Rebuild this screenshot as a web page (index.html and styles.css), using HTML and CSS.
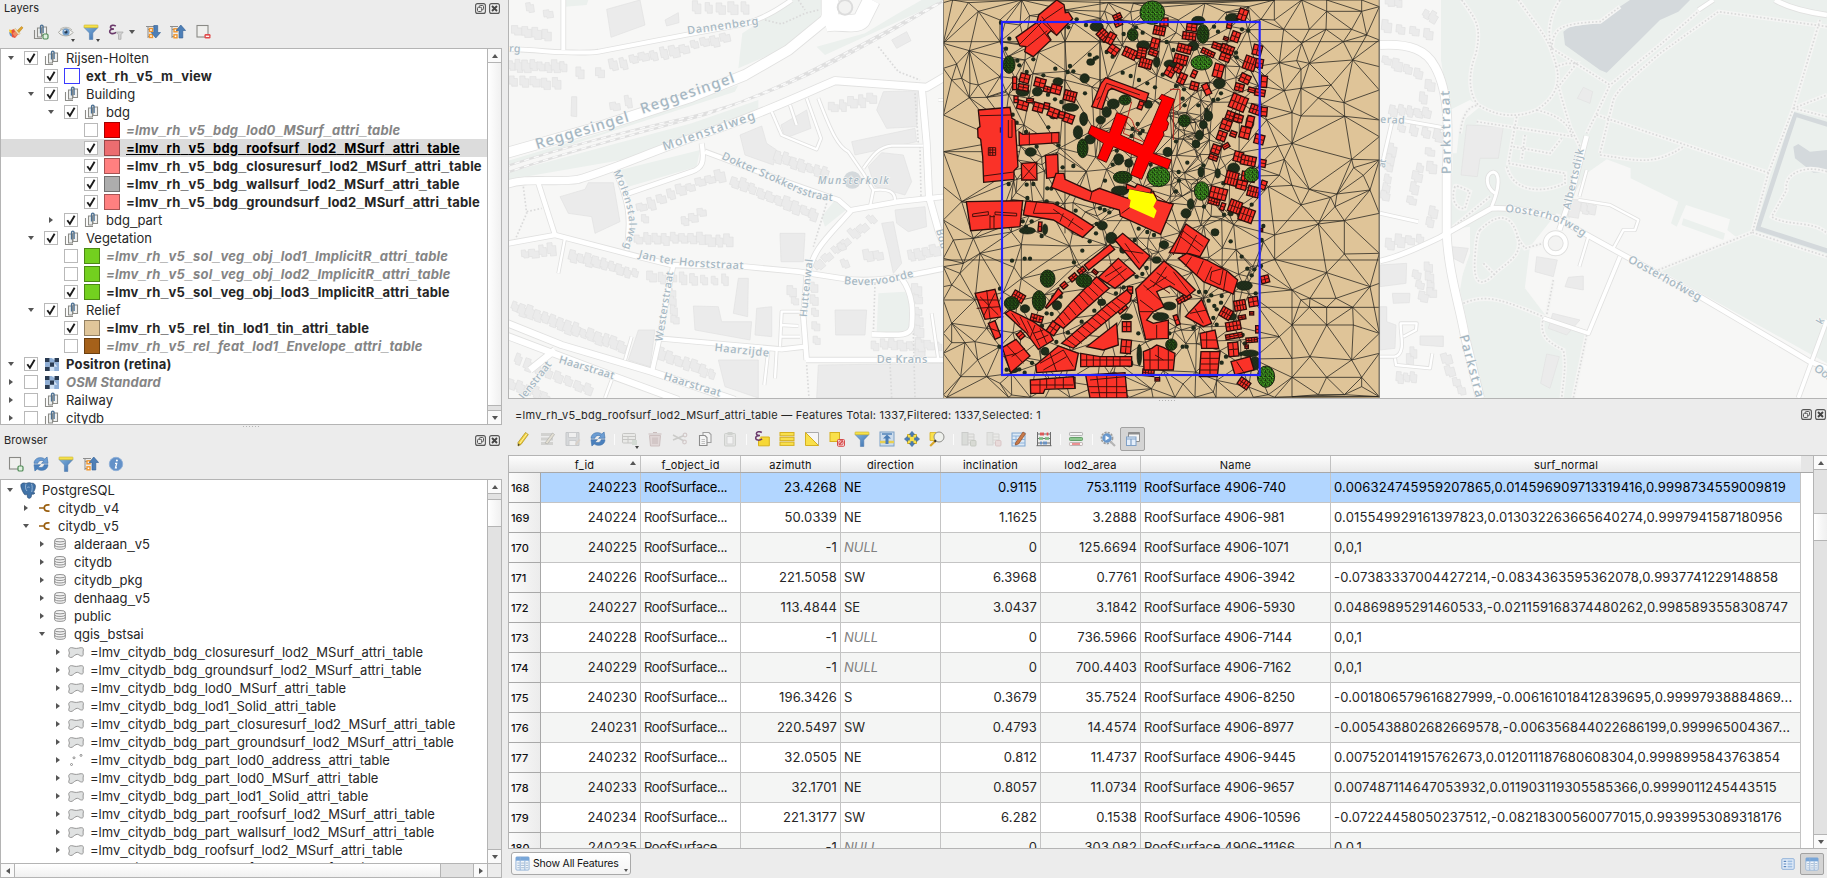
FILE: index.html
```html
<!DOCTYPE html>
<html lang="en">
<head>
<meta charset="utf-8">
<title>QGIS</title>
<link rel="stylesheet" href="styles.css">
</head>
<body>
<svg class="defs" width="0" height="0">
  <defs>
    <linearGradient id="bl" x1="0" y1="0" x2="1" y2="1"><stop offset="0" stop-color="#7fb0dc"/><stop offset="1" stop-color="#3a6fae"/></linearGradient>
    <symbol id="i-float" viewBox="0 0 11 11"><rect x=".6" y=".6" width="9.8" height="9.8" rx="2" fill="none" stroke="#555" stroke-width="1.1"/><rect x="4.3" y="2.5" width="4.2" height="4.2" rx="1" fill="none" stroke="#555"/><rect x="2.5" y="4.3" width="4.2" height="4.2" rx="1" fill="#ececec" stroke="#555"/></symbol>
    <symbol id="i-close" viewBox="0 0 11 11"><rect x=".6" y=".6" width="9.8" height="9.8" rx="2" fill="none" stroke="#555" stroke-width="1.1"/><path d="M3 3l5 5M8 3l-5 5" stroke="#444" stroke-width="1.9"/></symbol>
    <symbol id="i-style" viewBox="0 0 16 16"><path d="M1 5.500l3 .5 2 4-1 3-3-3z" fill="#f5c518"/><path d="M1 8l2.500 1.500L5 13.500l-3-2z" fill="#5b8fd0"/><path d="M3.500 6L6 5l4.500 5L7 14l-3-1z" fill="#e8503c"/><path d="M4.500 9.500l3-2.500 2.500 3-3 3z" fill="#ef8a63"/><path d="M6 5.500l1.500-1 4.500 5-1.500 1.500z" fill="#f2dfb8" stroke="#c9a666" stroke-width=".5"/><path d="M9.300 6.500l4.200-4 1.500 1.300-4 4.700z" fill="#e0a52c" stroke="#b57a14" stroke-width=".5"/></symbol>
    <symbol id="i-group" viewBox="0 0 16 16"><path d="M1.500 6v8.500H9" fill="none" stroke="#8c8c88" stroke-width="1.100"/><path d="M4.500 4h4v9h-4z" fill="#eef0ef" stroke="#8c8c88" stroke-width="1.100"/><path d="M9 3h4.500v8.500H9z" fill="#f2f3f3" stroke="#8c8c88" stroke-width="1.100"/><path d="M7.500 9.500v-7a1.300 1.300 0 0 1 2.600 0v6.500" fill="none" stroke="#4a6f92" stroke-width="1.300"/></symbol>
    <symbol id="i-addgroup" viewBox="0 0 16 16"><use href="#i-group"/><rect x="10" y="10" width="5" height="5" rx="1.200" fill="#dff0df" stroke="#4f8b55" stroke-width="1.200"/></symbol>
    <symbol id="i-eye" viewBox="0 0 16 16"><path d="M.5 8.500C3 4 11 3 15 8.500 12 13 4 13 .5 8.500z" fill="#f1f1ef" stroke="#a9a9a3" stroke-width="1"/><path d="M2 5.500C5 2.500 11 2.500 14 6" fill="none" stroke="#b9b9b3"/><circle cx="8" cy="8" r="3.600" fill="#6f9cc9"/><circle cx="8" cy="8" r="1.600" fill="#24384e"/><circle cx="7" cy="6.800" r=".8" fill="#fff"/></symbol>
    <symbol id="i-funnel" viewBox="0 0 16 16"><path d="M1 3.500h14L9.800 9v6.500H6.400V9z" fill="url(#bl)" stroke="#4875a8" stroke-width=".5"/><rect x="1" y="1" width="14" height="2.700" rx=".6" fill="#f5e14b" stroke="#c9b42d" stroke-width=".6"/></symbol>
    <symbol id="i-eps" viewBox="0 0 16 16"><path d="M7.800 2.200C5.500.6 2.200 1.300 2.400 3.300c.1 1.500 2 1.700 3.600 1.700-2.400 0-4.200.6-4.300 2.400-.1 2.500 4 3 6.400 1" fill="none" stroke="#6b3a6b" stroke-width="1.600"/><path d="M8.300 8h6.900l-2.200 2.700v4.600h-2.500v-4.600z" fill="#d2d2d2" stroke="#a6a6a6" stroke-width=".7"/></symbol>
    <symbol id="i-expand" viewBox="0 0 16 16"><path d="M1 2.500h10M3 2.500V14M3 5.500h3M3 12.500h3" stroke="#8d8d8d" fill="none"/><rect x="4.500" y="4.500" width="3" height="3" fill="#fff" stroke="#f0962e" stroke-width="1.400"/><rect x="4.500" y="10.500" width="3" height="3" fill="#fff" stroke="#f0962e" stroke-width="1.400"/><path d="M8.800 1.500h3.900V8.500h2.800L10.800 14 6.200 8.500h2.600z" fill="#4d7fb7" stroke="#2f5c92" stroke-width=".6"/></symbol>
    <symbol id="i-collapse" viewBox="0 0 16 16"><path d="M0 2.500h8M2 2.500V14M2 5.500h3M2 12.500h3" stroke="#8d8d8d" fill="none"/><rect x="4" y="4.800" width="3" height="3" fill="#fff" stroke="#f0962e" stroke-width="1.400"/><rect x="4" y="10.800" width="3" height="3" fill="#fff" stroke="#f0962e" stroke-width="1.400"/><path d="M9 14h3.800V6.500h2.800L10.800 1 6.200 6.500H9z" fill="#4d7fb7" stroke="#2f5c92" stroke-width=".6"/></symbol>
    <symbol id="i-remove" viewBox="0 0 16 16"><rect x="2" y="1.500" width="11" height="11.500" fill="#f0f0ee" stroke="#8a8a86" stroke-width="1.100"/><rect x="9.500" y="10" width="6" height="4.600" rx="1.300" fill="#e04a4a"/><path d="M10.800 12.300h3.400" stroke="#fff" stroke-width="1.300"/></symbol>
    <symbol id="i-addlayer" viewBox="0 0 16 16"><rect x="1.500" y="1.500" width="11" height="11.500" fill="#f0f0ee" stroke="#8a8a86" stroke-width="1.100"/><rect x="10" y="10" width="5" height="5" rx="1.300" fill="#dff0df" stroke="#4f8b55" stroke-width="1.200"/></symbol>
    <symbol id="i-refresh" viewBox="0 0 16 16"><path d="M1 7.300C1.300 1.500 8 .3 11.800 3l2.300-2 .9 6.300H8.500l2.300-2.200C8.500 3.700 5.500 4.500 4.800 7.300z" fill="#6c9dd3" stroke="#3d6fa8" stroke-width=".6"/><path d="M15 8.700c-.3 5.800-7 7-10.800 4.300l-2.300 2L1 8.700h6.500l-2.300 2.200c2.300 1.400 5.300.6 6-2.200z" fill="#4a80bd" stroke="#3d6fa8" stroke-width=".6"/></symbol>
    <symbol id="i-info" viewBox="0 0 16 16"><circle cx="8" cy="8" r="6.700" fill="#6391c8" stroke="#8fb0d8"/><circle cx="8.900" cy="4.600" r="1" fill="#fff"/><path d="M7 7.300h1.700L7.500 11.800H9" fill="none" stroke="#fff" stroke-width="1.300"/></symbol>
    <symbol id="i-raster" viewBox="0 0 14 14"><path d="M0 1h14v13H0z" fill="#cfe0f3"/><path d="M0 1h4.700v4.300H0zM9.300 1H14v4.300H9.300zM4.700 5.300h4.600v4.400H4.700zM0 9.700h4.700V14H0z" fill="#2a3b52"/><path d="M4.700 1h4.600v4.300H4.700zM0 5.300h4.700v4.400H0zM9.300 5.300H14v4.400H9.300zM9.300 9.700H14V14H9.300z" fill="#8eaed6"/><path d="M6.500 1h2.800v2zM9.300 6l3 3.700h-3z" fill="#d8e6f6"/></symbol>
    <symbol id="i-pg" viewBox="0 0 16 16"><path d="M1 2C2 0 5 .3 6 1c2-1 4-1 5.500-.3C14 .3 16 2 15.300 5c-.3 2-1.300 4-2.300 5l2 .5c-1 1.500-2.500 1.300-3.300.9-.3 2-.2 4.100-2.200 4.400-2 .2-2.300-1.300-2.400-4.300-1 1-2.600 1-3.300-.5C2 8 .3 4 1 2z" fill="#4173a8" stroke="#2b4f78" stroke-width=".7"/><path d="M6 1.500C5 4 5.500 7 7 8.500M11.500 1.500c1 2 .8 5 .2 8M7.200 5c1-.6 2-.6 2.500 0" fill="none" stroke="#a9c4df" stroke-width=".8"/></symbol>
    <symbol id="i-plug" viewBox="0 0 11 8"><path d="M0 4h5M10.500.9H9C6.800.9 5.300 2.400 5.300 4s1.500 3.100 3.700 3.100h1.500" fill="none" stroke="#9a5f0f" stroke-width="1.700"/></symbol>
    <symbol id="i-db" viewBox="0 0 12 12"><path d="M.7 2.300v7.400c0 2.200 10.600 2.200 10.600 0V2.300" fill="#f4f4f4" stroke="#858585" stroke-width=".9"/><ellipse cx="6" cy="2.200" rx="5.300" ry="1.700" fill="#f4f4f4" stroke="#858585" stroke-width=".9"/><path d="M.7 4.800c0 2.200 10.600 2.200 10.600 0M.7 7.300c0 2.200 10.600 2.200 10.600 0" fill="none" stroke="#858585" stroke-width=".9"/></symbol>
    <symbol id="i-poly" viewBox="0 0 16 11"><path d="M.8 2.500C1.500.5 3 .4 5 .9c3 .9 4.500.4 7-.1 2-.4 3.500.1 3.400 1.700-.1 1.800-.6 3-.2 5 .2 1.300-1.200 1.900-2.700 1.300-1.800-.9-2.500-2-4.500-1.200C5.500 8.700 5 10.600 2.700 10.500.4 10.300.4 8.600 1.200 7c.7-1.500-.8-2.800-.4-4.500z" fill="#e0e2e2" stroke="#8b8b8b" stroke-width=".9"/></symbol>
    <symbol id="i-points" viewBox="0 0 16 12"><g fill="#fff" stroke="#777" stroke-width=".8"><circle cx="3.500" cy="10.500" r="1"/><circle cx="6" cy="3.800" r="1"/><circle cx="13" cy="1.400" r="1"/></g></symbol>
    <symbol id="i-pencil" viewBox="0 0 16 16"><path d="M3 11.500L10.500 1.500l2.800 2L6 13.500l-3 1.500z" fill="#f2cf3c" stroke="#a58d22" stroke-width=".7"/><path d="M5 12L12 2.600" stroke="#fff3a5"/><path d="M3 15l.2-2.400 1.600 1.200z" fill="#333"/></symbol>
    <symbol id="i-multiedit" viewBox="0 0 16 16"><path d="M1 2h12v3H1zM1 6.500h12v3H1zM1 11h12v3H1z" fill="#d2d2d0"/><path d="M5 12L12.500 2l2 1.500L7.500 13z" fill="#e3dfd3" stroke="#b5b5b1" stroke-width=".8"/></symbol>
    <symbol id="i-save" viewBox="0 0 16 16"><path d="M1 1.500h13v13H1z" fill="#d6d8da" stroke="#c5c7c9"/><path d="M3.500 1.500h8v5h-8zM4 9.500h7v5H4z" fill="#efefef" stroke="#c5c7c9" stroke-width=".8"/><path d="M10 13l4-5 1.500 1L11 14.500z" fill="#d8d0c8"/></symbol>
    <symbol id="i-addfeat" viewBox="0 0 16 16"><rect x=".5" y="2.500" width="13" height="9.500" rx="1" fill="#e9e9e7" stroke="#c6c6c4"/><path d="M.5 5.500h13M.5 8.500h13M6 5.500V12" stroke="#c6c6c4"/><rect x="10" y="9" width="5" height="5" fill="#d3dad3"/></symbol>
    <symbol id="i-trash" viewBox="0 0 16 16"><path d="M2.500 4.500h11l-1 10.500h-9z" fill="#e0d6d6" stroke="#cdc0c0"/><path d="M1.500 3h13M6 1.500h4M6 6.500v6.500M8 6.500v6.500M10 6.500v6.500" stroke="#c9bcbc" stroke-width="1.200"/></symbol>
    <symbol id="i-cut" viewBox="0 0 16 16"><path d="M1 4l11 6M1 9l11-4.500" stroke="#cbcbc9" stroke-width="1.500"/><circle cx="13" cy="4" r="1.800" fill="none" stroke="#d3caca" stroke-width="1.200"/><circle cx="12.500" cy="11" r="1.800" fill="none" stroke="#d3caca" stroke-width="1.200"/></symbol>
    <symbol id="i-copy" viewBox="0 0 16 16"><path d="M6 1.500h6l2 2v8H6z" fill="#f3f3f3" stroke="#a0a0a0" stroke-width="1.100"/><path d="M2.500 4.500H8l2 2v8H2.500z" fill="#f5f5f5" stroke="#8c8c8c" stroke-width="1.100"/><path d="M4.500 8.500h3.500M4.500 10.500h3.500M4.500 12.500h3.500" stroke="#b4b4b4" stroke-width=".8"/></symbol>
    <symbol id="i-paste" viewBox="0 0 16 16"><rect x="2.500" y="2.500" width="11" height="12.500" rx="1" fill="#e2e3e1" stroke="#cdcfcc"/><path d="M5 5.500h6V13H5z" fill="#f2f2f2" stroke="#d5d5d5"/><rect x="5.500" y="1" width="5" height="3" fill="#cfd1ce"/></symbol>
    <symbol id="i-selexpr" viewBox="0 0 16 16"><path d="M6.500 6h8.800v8.800H4.500V9" fill="#f6d837" stroke="#d8b21a"/><path d="M7.800 1.500C5.500 0 2.200.8 2.400 2.800c.1 1.500 2 1.700 3.600 1.700-2.400 0-4.200.6-4.300 2.400-.1 2.500 4 3 6.400 1" fill="none" stroke="#6b3a6b" stroke-width="1.500"/></symbol>
    <symbol id="i-selall" viewBox="0 0 16 16"><g fill="#f9e04b" stroke="#d5b021"><rect x="1" y="1.500" width="14" height="3.300"/><rect x="1" y="6.300" width="14" height="3.300"/><rect x="1" y="11.100" width="14" height="3.300"/></g></symbol>
    <symbol id="i-invert" viewBox="0 0 16 16"><path d="M1.500 1.500h13v13z" fill="#f5f5f5" stroke="#aaa"/><path d="M1.500 1.500v13h13z" fill="#f9e04b" stroke="#d5b021"/></symbol>
    <symbol id="i-desel" viewBox="0 0 16 16"><rect x="1" y="1.500" width="9.500" height="9" fill="#f9e04b" stroke="#d5b021"/><rect x="8.500" y="8.500" width="7" height="6.800" rx="1" fill="#f6d9d9" stroke="#d64b4b"/><path d="M10 14l4-4.500" stroke="#d64b4b" stroke-width="1.300"/><circle cx="12" cy="11.800" r="2.200" fill="none" stroke="#d64b4b" stroke-width=".9"/></symbol>
    <symbol id="i-movetop" viewBox="0 0 16 16"><rect x="1" y="1" width="14" height="14" fill="#cddcec" stroke="#7ba0c6"/><path d="M1 11h14" stroke="#e7cf52" stroke-width="2.500"/><path d="M8 3.500l4 4H9.500V13h-3V7.500H4z" fill="#4a7db6"/><path d="M3 3h10" stroke="#4a7db6" stroke-width="1.400"/></symbol>
    <symbol id="i-pan" viewBox="0 0 16 16"><path d="M3.500 3.500h9v9h-9z" fill="#f9e04b" stroke="#d5b021"/><path d="M8 .3L10.800 3.500H9.200V5.500H6.800V3.500H5.200zM8 15.700L5.200 12.500h1.600v-2h2.400v2h1.600zM.3 8l3.200-2.800v1.600h2v2.400h-2v1.600zM15.700 8l-3.200 2.800V9.200h-2V6.800h2V5.200z" fill="#4a7db6" stroke="#335f92" stroke-width=".4"/></symbol>
    <symbol id="i-zoom" viewBox="0 0 16 16"><path d="M1 1.500h6v8H1z" fill="#f9e04b" stroke="#d5b021" stroke-width=".8"/><circle cx="10" cy="6" r="5" fill="#eef0ec" stroke="#8e8e8a" stroke-width="1"/><path d="M6.500 9.800L1.200 15" stroke="#d7a62b" stroke-width="2.200"/><path d="M7 9.300l-1.500 1.500" stroke="#333" stroke-width="2"/></symbol>
    <symbol id="i-newfield" viewBox="0 0 16 16"><rect x="1" y="1.500" width="6" height="12.500" fill="#dadcd9" stroke="#cacbc9"/><path d="M7 3h6v9H7zM7 6h6M7 9h6" fill="#e8e8e6" stroke="#d0d0ce"/><rect x="9.500" y="9.500" width="5.500" height="5.500" rx="1" fill="#d8dad4" stroke="#c6cac2"/></symbol>
    <symbol id="i-delfield" viewBox="0 0 16 16"><rect x="1" y="1.500" width="6" height="12.500" fill="#e2e3e1" stroke="#d5d6d4"/><path d="M7 3h6v9H7zM7 6h6M7 9h6" fill="#eaeae8" stroke="#d6d6d4"/><rect x="9.500" y="9.500" width="5.500" height="5.500" rx="1" fill="#e8dada" stroke="#d9c6c6"/></symbol>
    <symbol id="i-organize" viewBox="0 0 16 16"><rect x="1" y="2" width="13" height="13" fill="#dde9f5" stroke="#7fa6d0"/><path d="M1 5h13M5 5v10M1 8.500h13M1 12h13" stroke="#8fb4dc"/><path d="M4.500 12L12 1l2.500 1.700L7.500 13l-3.200 1z" fill="#c87a4a" stroke="#8f4e28" stroke-width=".7"/></symbol>
    <symbol id="i-abacus" viewBox="0 0 16 16"><path d="M1.500 1v14M14.500 1v14M1.500 3h13M1.500 7.500h13M1.500 12h13M.5 14.700h15" stroke="#6e6e6e" stroke-width="1"/><path d="M5 1.500v3M7 1.500v3M11.500 1.500v3" stroke="#e24b4b" stroke-width="1.700"/><path d="M4 6v3M6 6v3M10 6v3M12 6v3" stroke="#7fbf86" stroke-width="1.700"/><path d="M5 10.500v3M8 10.500v3M10 10.500v3" stroke="#5f8ec6" stroke-width="1.700"/></symbol>
    <symbol id="i-cond" viewBox="0 0 16 16"><rect x="1.500" y="1.500" width="13" height="3" rx=".8" fill="#f4f4f4" stroke="#a8a8a8" stroke-width=".9"/><rect x="1.500" y="6.500" width="13" height="3" rx=".8" fill="#8cc68e" stroke="#5b9a60" stroke-width=".9"/><rect x="1.500" y="11.500" width="13" height="3" rx=".8" fill="#faf3f3" stroke="#b8adad" stroke-width=".9"/><path d="M4 13h8" stroke="#e05050" stroke-width="1.200"/></symbol>
    <symbol id="i-action" viewBox="0 0 16 16"><circle cx="7" cy="7" r="5.600" fill="#dce8f4" stroke="#9d9d9d" stroke-width="1.600" stroke-dasharray="2.200 1.100"/><circle cx="7" cy="7" r="4.300" fill="#6a9ad0" stroke="#4d7cb0" stroke-width=".6"/><path d="M5.500 4.500L9.500 7l-4 2.500z" fill="#fff"/><path d="M10.500 10.500l4.500 4.500" stroke="#b5b5b5" stroke-width="2.200"/></symbol>
    <symbol id="i-dock" viewBox="0 0 16 16"><path d="M3.500 1.500h11v9h-11z" fill="#f6f6f6" stroke="#8d8d8d"/><path d="M3.500 2.500h11" stroke="#8d8d8d" stroke-width="2"/><rect x="1.500" y="6" width="9.500" height="8.500" fill="#e4eefa" stroke="#7fa0c6"/><path d="M1.500 8h9.500M6 8v6.500" stroke="#7fa0c6" stroke-width="1.200"/></symbol>
    <symbol id="i-table" viewBox="0 0 16 16"><rect x="1" y="1" width="14" height="14" rx="1" fill="#f2f6fb" stroke="#8fb0d6"/><path d="M1 1h14v4H1z" fill="#78a6d8"/><path d="M5.500 1v14M10.500 5v10" stroke="#8fb0d6"/><path d="M2.500 7.500H5M2.500 10H5M2.500 12.500H5M6.500 7.500h3.500M6.500 10h3.500M6.500 12.500h3.500M11.500 7.500h2.500M11.500 10h2.500M11.500 12.500h2.500" stroke="#9fb6cf"/></symbol>
    <symbol id="i-form" viewBox="0 0 16 16"><rect x="1" y="2" width="14" height="12" rx="1" fill="#e6effa" stroke="#7ba3d3"/><path d="M3 5h3M3 8h3M3 11h3" stroke="#5b86bd" stroke-width="1.400"/><path d="M7.500 5H13M7.500 8H13M7.500 11H13" stroke="#9dbde2" stroke-width="1.800"/></symbol>
    <pattern id="leaf" width="11" height="11" patternUnits="userSpaceOnUse"><rect width="11" height="11" fill="#16260f"/><path d="M1 2h2v2H1zM6 1h3v2H6zM3 6h2v3H3zM8 6h2v2H8zM6 9h2v1.500H6z" fill="#3f9a1f"/></pattern>
    <pattern id="leafhi" width="13" height="13" patternUnits="userSpaceOnUse"><rect width="13" height="13" fill="#16300d"/><path d="M0 1h5v3H0zM8 0h4v3H8zM3 6h3v4H3zM9 6h4v3H9zM6 10h3v3H6z" fill="#58d42a"/></pattern>
    <pattern id="leaflo" width="9" height="9" patternUnits="userSpaceOnUse"><rect width="9" height="9" fill="#1e2a19"/><path d="M1 2h2v1H1zM5 5h2v2H5z" fill="#2f5a22"/></pattern>
  </defs>
</svg>

<div class="app">
  <aside class="side">
    <section class="dock dock-layers">
      <header class="dock-title"><span>Layers</span><svg class="tb"><use href="#i-float"/></svg><svg class="tb"><use href="#i-close"/></svg></header>
      <div class="toolbar side-tools">
        <span class="tool"><svg><use href="#i-style"/></svg></span>
        <span class="tool"><svg><use href="#i-addgroup"/></svg></span>
        <span class="tool has-menu"><svg><use href="#i-eye"/></svg></span>
        <span class="tool has-menu"><svg><use href="#i-funnel"/></svg></span>
        <span class="tool"><svg><use href="#i-eps"/></svg></span>
        <span class="drop"><i class="tri down small"></i></span>
        <span class="tool"><svg><use href="#i-expand"/></svg></span>
        <span class="tool"><svg><use href="#i-collapse"/></svg></span>
        <span class="tool"><svg><use href="#i-remove"/></svg></span>
      </div>
      <div class="tree">
        <div class="rows" id="layers"></div>
        <div class="vscroll"><b class="btn"><i class="tri up small"></i></b><b class="thumb fill"></b><b class="gap"></b><b class="btn"><i class="tri down small"></i></b></div>
      </div>
    </section>
    <div class="splitter"></div>
    <section class="dock dock-browser">
      <header class="dock-title"><span>Browser</span><svg class="tb"><use href="#i-float"/></svg><svg class="tb"><use href="#i-close"/></svg></header>
      <div class="toolbar side-tools">
        <span class="tool"><svg><use href="#i-addlayer"/></svg></span>
        <span class="tool"><svg><use href="#i-refresh"/></svg></span>
        <span class="tool"><svg><use href="#i-funnel"/></svg></span>
        <span class="tool"><svg><use href="#i-collapse"/></svg></span>
        <span class="tool"><svg><use href="#i-info"/></svg></span>
      </div>
      <div class="tree">
        <div class="rows" id="browser"></div>
        <div class="vscroll"><b class="btn"><i class="tri up small"></i></b><b class="gap six"></b><b class="thumb short"></b><b class="gap fill"></b><b class="btn"><i class="tri down small"></i></b></div>
      </div>
      <div class="hscroll"><b class="btn"><i class="tri left small"></i></b><b class="thumb fill"></b><b class="gap"></b><b class="btn"><i class="tri right small"></i></b><b class="corner"></b></div>
    </section>
  </aside>

  <main class="main">
    <div class="mapbox">
      <svg id="map" width="1318" height="398" viewBox="509 0 1318 398">
        <rect x="508" width="1319" height="398" fill="#f7f7f6"/>
        <g transform="translate(505 0) scale(.33333)" id="west"></g>
        <g transform="translate(1370 0) scale(.33333)" id="east"></g>
        <g transform="translate(940 0) scale(.33333)" id="model"></g>
      </svg>
    </div>
    <div class="splitter"></div>
    <header class="dock-title table-title"><span>=lmv_rh_v5_bdg_roofsurf_lod2_MSurf_attri_table — Features Total: 1337,Filtered: 1337,Selected: 1</span><svg class="tb"><use href="#i-float"/></svg><svg class="tb"><use href="#i-close"/></svg></header>
    <div class="toolbar table-tools">
      <span class="tool"><svg><use href="#i-pencil"/></svg></span>
      <span class="tool"><svg><use href="#i-multiedit"/></svg></span>
      <span class="tool"><svg><use href="#i-save"/></svg></span>
      <span class="tool"><svg><use href="#i-refresh"/></svg></span>
      <i class="sep"></i>
      <span class="tool has-menu"><svg><use href="#i-addfeat"/></svg></span>
      <span class="tool"><svg><use href="#i-trash"/></svg></span>
      <span class="tool"><svg><use href="#i-cut"/></svg></span>
      <span class="tool"><svg><use href="#i-copy"/></svg></span>
      <span class="tool"><svg><use href="#i-paste"/></svg></span>
      <i class="sep"></i>
      <span class="tool"><svg><use href="#i-selexpr"/></svg></span>
      <span class="tool"><svg><use href="#i-selall"/></svg></span>
      <span class="tool"><svg><use href="#i-invert"/></svg></span>
      <span class="tool"><svg><use href="#i-desel"/></svg></span>
      <span class="tool"><svg><use href="#i-funnel"/></svg></span>
      <span class="tool"><svg><use href="#i-movetop"/></svg></span>
      <span class="tool"><svg><use href="#i-pan"/></svg></span>
      <span class="tool"><svg><use href="#i-zoom"/></svg></span>
      <i class="sep"></i>
      <span class="tool"><svg><use href="#i-newfield"/></svg></span>
      <span class="tool"><svg><use href="#i-delfield"/></svg></span>
      <span class="tool"><svg><use href="#i-organize"/></svg></span>
      <span class="tool"><svg><use href="#i-abacus"/></svg></span>
      <i class="sep"></i>
      <span class="tool"><svg><use href="#i-cond"/></svg></span>
      <i class="sep"></i>
      <span class="tool"><svg><use href="#i-action"/></svg></span>
      <span class="tool pressed"><svg><use href="#i-dock"/></svg></span>
    </div>
    <div class="grid">
      <div class="grid-main">
        <div class="ghead"><span></span><span class="sorted">f_id<i class="tri up small"></i></span><span>f_object_id</span><span>azimuth</span><span>direction</span><span>inclination</span><span>lod2_area</span><span>Name</span><span>surf_normal</span></div>
        <div id="rows"></div>
      </div>
      <div class="vscroll"><b class="btn"><i class="tri up small"></i></b><b class="gap g43"></b><b class="thumb short"></b><b class="gap fill"></b><b class="btn"><i class="tri down small"></i></b></div>
    </div>
    <footer class="foot">
      <div class="showall"><svg><use href="#i-table"/></svg><span>Show All Features</span><i class="tri down tiny"></i></div>
      <span class="view"><svg><use href="#i-form"/></svg></span>
      <span class="view on"><svg><use href="#i-table"/></svg></span>
    </footer>
  </main>
</div>
<script src="app.js"></script>
</body>
</html>
```

FILE: styles.css
```css
* { box-sizing: border-box; }
body { margin: 0; width: 1827px; height: 878px; overflow: hidden; background: #ececec; font-family: Inter, "Liberation Sans", sans-serif; font-size: 13px; color: #262626; }
.defs { position: absolute; }
.app { display: flex; height: 878px; }
.side { width: 502px; display: flex; flex-direction: column; }
.main { width: 1319px; margin-left: 6px; display: flex; flex-direction: column; }
.dock { display: flex; flex-direction: column; }
.dock-layers { height: 425px; }
.dock-browser { height: 448px; padding-top: 2px; }
.dock-title { display: flex; align-items: center; gap: 3px; height: 16px; padding: 0 2px 0 4px; font-size: 11px; letter-spacing: .1px; flex: none; }
.dock-title span { flex: 1; white-space: nowrap; }
.tb { width: 11px; height: 11px; }
.splitter { height: 5px; flex: none; background: repeating-linear-gradient(90deg, #b5b5b5 0 1px, transparent 1px 3px) center 1px / 17px 1px no-repeat; }
.toolbar { display: flex; align-items: center; height: 32px; flex: none; }
.dock-browser .toolbar { height: 31px; }
.side-tools { padding-left: 3px; }
.tool { position: relative; width: 25px; height: 24px; display: flex; align-items: center; justify-content: center; }
.tool svg { width: 16px; height: 16px; }
.has-menu::after { content: ""; position: absolute; right: 3px; bottom: 2px; border: 2.5px solid transparent; border-top: 3px solid #444; border-bottom: 0; }
.pressed { border: 1px solid #a2a2a2; border-radius: 2px; background: #d4d4d4; }
.sep { width: 7px; height: 11px; background: linear-gradient(#fbfbfb, #fbfbfb) 4px 0 / 1px 100% no-repeat; }
.drop { width: 12px; padding-left: 1px; }
.tri { display: block; width: 0; height: 0; border: 4px solid transparent; }
.tri.down { border-top: 5px solid #555; border-bottom: 0; }
.tri.up { border-bottom: 5px solid #555; border-top: 0; }
.tri.right { border-left: 5px solid #555; border-right: 0; }
.tri.left { border-right: 5px solid #555; border-left: 0; }
.tri.small { border-left-width: 3.5px; border-right-width: 3.5px; }
.tri.small.up { border-bottom-width: 4px; }
.tri.small.down { border-top-width: 4px; }
.tri.small.left { border-width: 3.5px 4px 3.5px 0; }
.tri.small.right { border-width: 3.5px 0 3.5px 4px; }
.tri.tiny { border-width: 3px 2.5px 0; }
.tree { flex: 1; min-height: 0; display: flex; border: 1px solid #b4b4b4; background: #fff; }
.dock-browser .tree { border-bottom: 0; }
.rows { flex: 1; min-width: 0; overflow: hidden; }
.row { height: 18px; display: flex; align-items: center; white-space: nowrap; }
.row .exp { width: 10px; display: flex; justify-content: center; flex: none; }
.us { font-family: "Liberation Sans", sans-serif; font-size: 13.5px; line-height: 1; }
.b .us, .off .us { font-size: 14.5px; letter-spacing: 0; }
.box { width: 14px; height: 14px; border: 1px solid #b9b9b9; background: #fff; margin: 0 6px 0 8px; flex: none; }
.box svg { display: block; width: 12px; height: 12px; }
.icon { width: 16px; height: 16px; margin-right: 6px; flex: none; }
.icon.raster { width: 14px; height: 14px; margin: 0 7px 0 1px; }
.swatch { width: 16px; height: 16px; margin-right: 6px; border: 1px solid rgba(0, 0, 0, .35); flex: none; }
.s-view { border: 1px solid #3a3aff; }
.s-red { background: #f00; }
.s-roof { background: #eb6d70; }
.s-pink { background: #ff8080; }
.s-gray { background: #adadad; }
.s-green { background: #73d01f; }
.s-tan { background: #e0c69a; }
.s-brown { background: #a5611a; }
.row.b { font-weight: 700; letter-spacing: .17px; }
.row.off { font-weight: 700; font-style: italic; letter-spacing: .17px; color: #858585; }
.row.sel { background: #dcdcdc; color: #000; }
.row.sel .label { text-decoration: underline; }
.l0 { padding-left: 5px; }
.l1 { padding-left: 25px; }
.l2 { padding-left: 45px; }
.l3 { padding-left: 65px; }
.m0 { padding-left: 3px; }
.m1 { padding-left: 19px; }
.m2 { padding-left: 35px; }
.m3 { padding-left: 51px; }
#browser { padding-top: 1px; }
#browser .exp { width: 11px; margin-right: 4px; }
#browser .icon { margin-right: 6px; margin-left: 1px; }
.m0 .icon { height: 17px; }
#browser .db { width: 12px; height: 12px; margin-left: 3px; margin-right: 8px; }
#browser .plug { width: 11px; height: 8px; margin-left: 4px; margin-right: 8px; }
#browser .poly { height: 11px; }
.vscroll { width: 14px; flex: none; border-left: 1px solid #b4b4b4; background: #e2e2e2; display: flex; flex-direction: column; }
.vscroll .btn { height: 14px; display: flex; align-items: center; justify-content: center; background: #fafafa; border-bottom: 1px solid #b4b4b4; flex: none; }
.vscroll .btn:last-child { border-bottom: 0; border-top: 1px solid #b4b4b4; }
.vscroll .thumb { background: linear-gradient(90deg, #fff, #f0f0f0); border-bottom: 1px solid #b4b4b4; }
.vscroll .gap + .thumb { border-top: 1px solid #b4b4b4; }
.vscroll .short { height: 28px; }
.vscroll .gap { height: 4px; }
.vscroll .six { height: 5px; }
.vscroll .g43 { height: 43px; }
.vscroll .fill { flex: 1; }
.hscroll { display: flex; height: 15px; border: 1px solid #b4b4b4; background: #e2e2e2; flex: none; }
.hscroll .btn { width: 14px; background: #fafafa; border-right: 1px solid #b4b4b4; display: flex; align-items: center; justify-content: center; }
.hscroll .thumb { flex: 1; background: linear-gradient(#fff, #f0f0f0); border-right: 1px solid #b4b4b4; }
.hscroll .gap { width: 33px; border-right: 1px solid #b4b4b4; }
.hscroll .corner { width: 13px; background: #ececec; }
.mapbox { height: 399px; border-left: 1px solid #b4b4b4; border-bottom: 1px solid #b4b4b4; flex: none; overflow: hidden; }
#map { display: block; }
.main .splitter { height: 3px; }
.table-title { height: 25px; padding: 0 1px 0 7px; letter-spacing: .25px; }
.table-tools { height: 28px; padding: 0 0 4px 2px; }
.grid { display: flex; height: 394px; border: 1px solid #b4b4b4; border-right: 0; background: #fff; flex: none; }
.grid-main { width: 1304px; overflow: hidden; }
.ghead, .gr { display: grid; grid-template-columns: 32px repeat(6, 100px) 190px 470px; width: 1292px; }
.ghead { height: 17px; width: 1304px; font-size: 11px; letter-spacing: .2px; color: #111; background: #e6e6e6; border-bottom: 1px solid #a8a8a8; }
.ghead span { position: relative; display: flex; align-items: center; justify-content: center; padding-top: 2px; border-right: 1px solid #c2c2c2; background: linear-gradient(#fdfdfd, #e9e9e9); }
.ghead span:first-child, .ghead span:last-child { border-right: 0; }
.ghead .sorted { padding-right: 12px; }
.ghead .tri { position: absolute; right: 4px; top: 5px; }
.gr { height: 30px; }
.gr span { display: flex; align-items: center; border-right: 1px solid #c4c4c4; border-bottom: 1px solid #c4c4c4; padding: 0 3px 1px; white-space: nowrap; overflow: hidden; }
.gr:nth-child(odd) span { background: #f4f5f4; }
.gr:nth-child(even) span { background: #fff; }
.gr.sel span { background: #b2d6ff; color: #000; }
.gr span.hd, .gr.sel span.hd { font-size: 11px; font-weight: 500; letter-spacing: 0; padding: 0 2px; color: #111; background: linear-gradient(90deg, #fbfbfb, #ececec); border-right-color: #a8a8a8; border-bottom-color: #a8a8a8; }
.gr .num { justify-content: flex-end; letter-spacing: .15px; }
.gr .obj { letter-spacing: -.33px; }
.gr .vec { letter-spacing: .17px; }
.gr .nul { font-style: italic; color: #808080; }
.foot { flex: 1; display: flex; align-items: center; padding: 0 3px 0 3px; }
.showall { position: relative; display: flex; align-items: center; width: 120px; height: 23px; margin-right: auto; padding-left: 3px; border: 1px solid #a9a9a9; border-radius: 3px; background: linear-gradient(#fff, #f3f3f3); font-size: 10.5px; letter-spacing: -.2px; color: #111; }
.showall svg { width: 15px; height: 15px; margin-right: 3px; }
.showall .tri { position: absolute; right: 2px; bottom: 2px; }
.view { width: 24px; height: 22px; display: flex; align-items: center; justify-content: center; }
.view svg { width: 14px; height: 14px; }
.view.on { border: 1px solid #a2a2a2; border-radius: 2px; background: #d4d4d4; }
.street { fill: #a6b7c3; font-family: "Noto Sans", sans-serif; font-weight: 500; stroke: #f7f7f6; stroke-width: 4px; paint-order: stroke; }
.casing { fill: none; stroke: #e1e1e0; stroke-linejoin: round; }
.road { fill: none; stroke: #fff; stroke-linejoin: round; }
.path { fill: none; stroke: #dadada; stroke-width: 5px; stroke-dasharray: 5 6; }
.pathbed { fill: none; stroke: #f5f5f4; stroke-width: 13px; }
.green { fill: #ebf0ed; }
.water { fill: #d4d9dc; }
.house { fill: #ebebeb; stroke: #e1e1e1; stroke-width: 2px; }
.tin { fill: none; stroke: #2b2822; stroke-width: 2.8px; stroke-opacity: .85; }
.bld { fill: #fa3228; stroke: #2c0f0c; stroke-width: 4px; }
.bldline { fill: none; stroke: #450f0b; stroke-width: 3px; }
.tree-dot { fill: #1f2a1b; }
```

FILE: app.js
```js
// ---------- layer tree ----------
const tick = '<svg viewBox="0 0 12 12"><path d="M2.300 6.300l2.600 3.500L9.600 1.800" fill="none" stroke="#1c1c1c" stroke-width="1.900"/></svg>';
const wide = s => s.replace(/_/g, '<span class="us">_</span>');
const layers = [
  [0, 'open', 1, 'group', '', 'Rijsen-Holten'],
  [1, '', 1, 's-view', 'b', 'ext_rh_v5_m_view'],
  [1, 'open', 1, 'group', '', 'Building'],
  [2, 'open', 1, 'group', '', 'bdg'],
  [3, '', 0, 's-red', 'off', '=lmv_rh_v5_bdg_lod0_MSurf_attri_table'],
  [3, '', 1, 's-roof', 'b sel', '=lmv_rh_v5_bdg_roofsurf_lod2_MSurf_attri_table'],
  [3, '', 1, 's-pink', 'b', '=lmv_rh_v5_bdg_closuresurf_lod2_MSurf_attri_table'],
  [3, '', 1, 's-gray', 'b', '=lmv_rh_v5_bdg_wallsurf_lod2_MSurf_attri_table'],
  [3, '', 1, 's-pink', 'b', '=lmv_rh_v5_bdg_groundsurf_lod2_MSurf_attri_table'],
  [2, 'shut', 1, 'group', '', 'bdg_part'],
  [1, 'open', 1, 'group', '', 'Vegetation'],
  [2, '', 0, 's-green', 'off', '=lmv_rh_v5_sol_veg_obj_lod1_ImplicitR_attri_table'],
  [2, '', 0, 's-green', 'off', '=lmv_rh_v5_sol_veg_obj_lod2_ImplicitR_attri_table'],
  [2, '', 1, 's-green', 'b', '=lmv_rh_v5_sol_veg_obj_lod3_ImplicitR_attri_table'],
  [1, 'open', 1, 'group', '', 'Relief'],
  [2, '', 1, 's-tan', 'b', '=lmv_rh_v5_rel_tin_lod1_tin_attri_table'],
  [2, '', 0, 's-brown', 'off', '=lmv_rh_v5_rel_feat_lod1_Envelope_attri_table'],
  [0, 'open', 1, 'raster', 'b', 'Positron (retina)'],
  [0, 'shut', 0, 'raster', 'off', 'OSM Standard'],
  [0, 'shut', 0, 'group', '', 'Railway'],
  [0, 'shut', 0, 'group', '', 'citydb']
];
const exp = s => `<span class="exp">${s ? `<i class="tri small ${s === 'open' ? 'down' : 'right'}"></i>` : ''}</span>`;
document.getElementById('layers').innerHTML = layers.map(([lv, ex, on, ic, cls, name]) => {
  const pic = ic.startsWith('s-') ? `<span class="swatch ${ic}"></span>` : `<svg class="icon ${ic}"><use href="#i-${ic}"/></svg>`;
  return `<div class="row l${lv} ${cls}">${exp(ex)}<span class="box">${on ? tick : ''}</span>${pic}<span class="label">${wide(name)}</span></div>`;
}).join('');

// ---------- browser tree ----------
const p = '=lmv_citydb_bdg_';
const browser = [
  [0, 'open', 'pg', 'PostgreSQL'], [1, 'shut', 'plug', 'citydb_v4'], [1, 'open', 'plug', 'citydb_v5'],
  [2, 'shut', 'db', 'alderaan_v5'], [2, 'shut', 'db', 'citydb'], [2, 'shut', 'db', 'citydb_pkg'],
  [2, 'shut', 'db', 'denhaag_v5'], [2, 'shut', 'db', 'public'], [2, 'open', 'db', 'qgis_bstsai'],
  ...['closuresurf_lod2_MSurf', 'groundsurf_lod2_MSurf', 'lod0_MSurf', 'lod1_Solid', 'part_closuresurf_lod2_MSurf',
    'part_groundsurf_lod2_MSurf', 'part_lod0_address', 'part_lod0_MSurf', 'part_lod1_Solid', 'part_roofsurf_lod2_MSurf',
    'part_wallsurf_lod2_MSurf', 'roofsurf_lod2_MSurf', 'wallsurf_lod2_MSurf'
  ].map(n => [3, 'shut', n.includes('address') ? 'points' : 'poly', p + n + '_attri_table'])
];
document.getElementById('browser').innerHTML = browser.map(([lv, ex, ic, name]) =>
  `<div class="row m${lv}">${exp(ex)}<svg class="icon ${ic}"><use href="#i-${ic}"/></svg><span class="label">${wide(name)}</span></div>`).join('');

// ---------- attribute table ----------
const data = [
  [168, 240223, '23.4268', 'NE', '0.9115', '753.1119', '740', '0.006324745959207865,0.014596909713319416,0.9998734559009819'],
  [169, 240224, '50.0339', 'NE', '1.1625', '3.2888', '981', '0.015549929161397823,0.013032263665640274,0.9997941587180956'],
  [170, 240225, '-1', 'NULL', '0', '125.6694', '1071', '0,0,1'],
  [171, 240226, '221.5058', 'SW', '6.3968', '0.7761', '3942', '-0.07383337004427214,-0.0834363595362078,0.9937741229148858'],
  [172, 240227, '113.4844', 'SE', '3.0437', '3.1842', '5930', '0.04869895291460533,-0.021159168374480262,0.9985893558308747'],
  [173, 240228, '-1', 'NULL', '0', '736.5966', '7144', '0,0,1'],
  [174, 240229, '-1', 'NULL', '0', '700.4403', '7162', '0,0,1'],
  [175, 240230, '196.3426', 'S', '0.3679', '35.7524', '8250', '-0.001806579616827999,-0.006161018412839695,0.99997938884869...'],
  [176, 240231, '220.5497', 'SW', '0.4793', '14.4574', '8977', '-0.005438802682669578,-0.006356844022686199,0.999965004367...'],
  [177, 240232, '32.0505', 'NE', '0.812', '11.4737', '9445', '0.007520141915762673,0.012011187680608304,0.9998995843763854'],
  [178, 240233, '32.1701', 'NE', '0.8057', '11.0734', '9657', '0.007487114647053932,0.011903119305585366,0.9999011245443515'],
  [179, 240234, '221.3177', 'SW', '6.282', '0.1538', '10596', '-0.07224458050237512,-0.08218300560077015,0.9939953089318176'],
  [180, 240235, '-1', 'NULL', '0', '303.082', '11166', '0,0,1']
];
document.getElementById('rows').innerHTML = data.map((r, i) =>
  `<div class="gr${i ? '' : ' sel'}"><span class="hd">${r[0]}</span><span class="num">${r[1]}</span><span class="obj">RoofSurface...</span><span class="num">${r[2]}</span><span class="${r[3] === 'NULL' ? 'nul' : ''}">${r[3]}</span><span class="num">${r[4]}</span><span class="num">${r[5]}</span><span>RoofSurface 4906-${r[6]}</span><span class="vec">${r[7]}</span></div>`).join('');

// ---------- map ----------
let seed = 7;
const rnd = () => (seed = (seed * 16807) % 2147483647) / 2147483647;
const put = (id, s) => { document.getElementById(id).innerHTML = s; };
const roads = list => list.map(([w, d]) => `<path class="casing" stroke-width="${w + 5}" d="${d}"/>`).join('') +
  list.map(([w, d]) => `<path class="road" stroke-width="${w}" d="${d}"/>`).join('');
const polys = (cls, list) => list.map(q => `<polygon class="${cls}" points="${q}"/>`).join('');
const paths = list => list.map(d => `<path class="pathbed" d="${d}"/>`).join('') + list.map(d => `<path class="path" d="${d}"/>`).join('');
// rows of small footprints: x1,y1,x2,y2,count,rotation
const terraces = list => list.map(([x1, y1, x2, y2, n, a]) => {
  let s = '';
  for (let i = 0; i < n; i++) {
    const t = n > 1 ? i / (n - 1) : 0, x = x1 + (x2 - x1) * t, y = y1 + (y2 - y1) * t + (rnd() - .5) * 8;
    const w = 20 + rnd() * 12, h = 24 + rnd() * 16;
    s += `<path class="house" transform="translate(${x.toFixed(1)} ${y.toFixed(1)}) rotate(${a})" d="M${-w / 2} ${-h / 2}h${w * .6}v${h * .25}h${w * .4}v${h * .75}h${-w * .7}v${-h * .2}h${-w * .3}z"/>`;
  }
  return s;
}).join('');
const label = (x, y, a, size, len, t) => `<text class="street" x="${x}" y="${y}" transform="rotate(${a} ${x} ${y})" font-size="${size * 1.13}" textLength="${len}">${t}</text>`;
const curve = (id, d, size, len, t) => `<path id="${id}" d="${d}" fill="none"/><text class="street" font-size="${size * 1.13}"><textPath href="#${id}" textLength="${len}">${t}</textPath></text>`;

put('west',
  polys('green', ['180,0 250,0 245,15 180,20', '850,0 950,0 945,60 850,140 700,205 712,100 780,55', '935,140 1080,100 1180,40 1250,0 1320,0 960,165', '0,485 300,395 700,255 690,275 350,385 0,500', '0,520 560,370 760,300 760,325 600,395 350,480 60,530 0,540', '345,510 585,450 575,500 370,560', '950,650 990,600 1030,625 960,680', '1120,880 1200,875 1222,930 1215,1000 1115,1000']) +
  '<circle class="water" cx="1042" cy="540" r="26"/>' +
  polys('house', ['305,28 405,0 420,75 318,112', '165,590 240,568 250,548 325,548 345,665 270,700 260,650 190,640', '705,405 770,378 785,430 815,450 805,495 720,465', '828,375 905,330 918,385 840,415', '1135,275 1240,272 1235,380 1145,385 1115,330', '1040,425 1230,385 1235,425 1050,465', '1090,500 1130,458 1195,465 1220,545 1200,585 1110,560', '825,700 900,700 895,785 828,785', '565,918 640,920 650,965 740,965 735,1020 570,990', '755,925 800,920 800,1010 750,1005', '990,930 1085,930 1080,1005 992,1005', '700,835 730,835 728,950 685,940', '200,290 215,290 215,350 198,348', '1170,630 1260,620 1265,680 1210,695 1175,670', '1130,670 1165,665 1190,790 1165,820 1150,750', '940,1095 1320,1090 1320,1194 935,1194', '400,990 450,990 435,1100 370,1080', '640,1080 760,1080 760,1194 660,1160', '480,60 520,38 522,68 485,78', '1160,120 1205,95 1218,122 1175,145']) +
  terraces([[35, 95, 125, 105, 4, 0], [75, 20, 130, 40, 2, -8], [575, 20, 720, 25, 5, 0], [20, 198, 175, 200, 8, 0], [25, 245, 155, 250, 5, 0], [225, 215, 285, 220, 2, 0], [325, 195, 660, 115, 12, -12], [330, 320, 370, 305, 2, -8], [410, 620, 645, 525, 9, -12], [690, 545, 925, 645, 10, 18], [400, 715, 670, 720, 11, 0], [420, 660, 435, 655, 1, 0], [60, 765, 140, 750, 4, -5], [205, 770, 390, 820, 9, 14], [30, 920, 350, 1040, 15, 20], [440, 830, 660, 840, 8, 0], [540, 660, 590, 640, 3, -5], [820, 470, 960, 520, 7, 18], [985, 320, 1100, 295, 5, 0], [940, 790, 1100, 660, 7, -40], [1020, 790, 1010, 740, 2, -20], [1220, 770, 1290, 750, 4, -10], [860, 870, 870, 900, 2, 0], [925, 860, 935, 1020, 5, 0], [1090, 770, 1120, 770, 2, -10], [1235, 870, 1245, 1060, 7, 0], [470, 1060, 620, 1120, 7, 18], [40, 1080, 250, 1170, 8, 20], [20, 1150, 120, 1190, 5, 20], [500, 880, 510, 960, 4, 0], [1110, 1035, 1300, 1035, 8, 0]]) +
  '<path d="M0 520C200 450 400 400 600 345 850 260 1000 170 1300 10M0 500C200 435 400 385 560 350 800 290 1000 190 1320 0" fill="none" stroke="#dfdfdf" stroke-width="7"/><path d="M0 520C200 450 400 400 600 345 850 260 1000 170 1300 10M0 500C200 435 400 385 560 350 800 290 1000 190 1320 0" fill="none" stroke="#f9f9f9" stroke-width="4" stroke-dasharray="16 14"/>' +
  ['M55 560L65 640 30 720M65 635L110 625', 'M780 60L830 72 900 40 940 30M880 0L900 30', 'M1120 140L1180 215 1245 240', 'M965 610L925 740M1110 850L1105 1000M1225 1000L1230 1194M905 1095L912 1194M1155 1090L1160 1194M1245 440L1248 590M1230 280L1240 430'].map(d => `<path class="path" d="${d}"/>`).join('') +
  roads([[7, 'M800 335L830 405 935 448 948 415 905 295M855 315L875 375M940 295C980 400 1000 440 1030 455L1075 520 1105 570 1095 620M1075 505C1100 470 1120 440 1160 437H1255M1105 570C1150 565 1170 575 1170 600'], [7, 'M825 1040L830 935H885M825 975L880 978M825 1010H885M790 1050L778 1155M815 1050L810 1135M380 1010L360 1080M320 1140L300 1194M180 715L160 820M1300 300L1320 300M1280 940L1300 1080'],
    [12, 'M0 147C120 150 200 165 280 155L540 105 720 72C790 50 830 20 860 0M175 0V150'], [13, 'M97 540L150 705M600 455L800 530 1000 600 1040 635M590 430C600 490 590 505 560 515L370 580M330 510C370 600 380 650 365 750M505 795L460 1030 440 1120M460 1015L830 1048 900 1040'],
    [14, 'M0 732L150 705 400 770 500 795 720 800 880 815 1010 835C1100 850 1200 830 1320 805M905 1080L895 950 905 830C930 740 960 720 1040 630L1180 605 1320 590M903 1080H1320M1190 835C1230 890 1222 950 1220 980 1215 1010 1180 1005 1100 1003'],
    [19, 'M1250 260L1265 430 1272 590 1300 690 1320 740M0 967L170 1035 440 1115 690 1200M0 1005L330 1130 520 1200M75 1110L150 1050'],
    [22, 'M0 555C60 530 150 550 220 538 320 510 450 450 600 400 750 350 900 280 990 242L1265 262 1320 230'], [30, 'M0 460L300 375 560 290 720 225 850 150 960 60 990 0'], [50, 'M960 70C1000 60 1050 80 1070 60L1100 0M975 0V60']]) +
  '<circle cx="1020" cy="22" r="22" fill="#f2f2f1" stroke="#dcdcdc" stroke-width="6"/>' +
  label(548, 103, -8, 29, 215, 'Dannenberg') + label(12, 155, 3, 28, 34, 'rg') + label(96, 448, -17, 39, 290, 'Reggesingel') + label(412, 342, -19, 39, 295, 'Reggesingel') +
  label(478, 452, -19, 33, 290, 'Molenstalweg') + curve('c1', 'M648 475C740 520 800 540 860 570S960 600 1000 605', 29, 360, 'Dokter Stokkersstraat') +
  curve('c2', 'M325 515C350 570 378 640 372 690L350 765', 27, 240, 'Molenstalweg') + `<text class="street" font-style="italic" x="938" y="553" font-size="31" textLength="213">Munsterkolk</text>` +
  curve('c3', 'M400 772C500 800 600 803 720 808', 29, 318, 'Jan ter Horststraat') + label(472, 1025, -81, 28, 212, 'Westerstraat') + label(905, 952, -84, 28, 175, 'Huttenwal') +
  curve('c4', 'M1016 852C1100 862 1160 850 1235 827', 29, 214, 'Bevervoorde') + label(628, 1053, 6, 29, 164, 'Haarzijde') + label(1115, 1090, 0, 29, 152, 'De Krans') +
  label(160, 1088, 17, 29, 172, 'Haarstraat') + label(474, 1138, 17, 29, 178, 'Haarstraat') + label(58, 1200, -52, 28, 135, 'lenstraat') + label(1293, 690, 75, 27, 60, 'Bou'));

put('east',
  polys('green', ['213,0 1371,0 1371,1090 850,800 700,700 560,640 480,740 465,860 530,900 650,1010 610,1200 340,1200 270,870 300,690 240,700 250,420 213,180']) +
  `<g fill="#f7f7f6">${['650,520 710,478 782,505 782,535 925,605 903,670 920,680 948,615 1080,658 1072,690 1110,720 1040,740 870,812 740,740 600,660 600,600', '225,690 300,680 300,760 265,860 230,800', '500,740 600,700 740,760 650,1000 530,950 465,865', '240,330 300,300 330,320 270,370 260,460 240,460'].map(q => `<polygon points="${q}"/>`).join('')}</g>` +
  polys('green', ['940,655 1065,700 1060,720 935,675', '960,0 1371,0 1371,40 1000,30']) +
  polys('water', ['600,80 675,70 780,0 960,0 925,35 870,60 800,130 710,218 690,210 585,135 580,95', '1270,440 1285,432 1320,455 1371,450 1371,515 1330,518 1275,475', '1270,335 1371,365 1371,380 1280,352 1172,680 1371,745 1371,760 1155,690']) +
  polys('house', ['290,375 400,380 385,475 330,475 322,530 273,525', '30,795 110,790 108,850 30,860', '67,880 120,880 118,908 70,910', '500,770 562,780 550,830 495,815', '595,832 640,828 640,870 585,860', '640,262 668,275 660,310 622,295', '548,940 630,960 590,1005 535,985', '530,1062 568,1070 540,1165 512,1150', '30,920 50,920 50,965 78,975 75,1045 30,1050', '600,598 635,600 625,655 595,650', '150,1008 220,1008 220,1040 150,1035', '245,740 295,745 280,790 250,775']) +
  terraces([[50, 80, 175, 100, 4, 5], [170, 40, 190, 50, 2, 30], [50, 180, 145, 220, 4, 10], [180, 260, 160, 290, 2, 5], [70, 330, 170, 340, 5, 12], [95, 385, 205, 405, 4, 12], [65, 450, 45, 590, 6, 10], [180, 455, 185, 500, 2, 5], [150, 500, 125, 600, 4, 10], [190, 640, 180, 670, 2, 10], [60, 730, 150, 715, 4, 5], [175, 800, 185, 880, 4, 0], [140, 820, 160, 890, 3, 10], [130, 1060, 120, 1080, 2, 0], [230, 1080, 240, 1110, 2, -15], [90, 1130, 130, 1135, 3, 5], [260, 1150, 275, 1170, 2, -10], [60, 0, 85, 5, 2, 0], [645, 625, 665, 625, 2, 10]]) +
  paths(['M275 0C320 60 335 80 318 160 290 230 300 290 325 315 380 350 440 355 500 330 560 290 570 250 560 200 545 150 535 120 500 75L445 0', 'M570 0C530 60 535 110 545 145L720 255 680 340 650 400M545 145C550 90 560 70 690 65L750 20', 'M555 200L590 190 620 190 565 260 600 380 630 440', 'M320 365L610 410M440 350L415 490 585 520 585 550C520 580 430 580 410 500', 'M500 330C580 350 600 380 605 410M465 405L455 480M430 440L540 460 575 415', 'M990 30L870 135 720 255', 'M1371 80L1045 35 870 160C800 220 740 270 730 300L690 460M680 345L1200 520M690 465C800 480 850 500 940 440', 'M1350 60L1270 325 1195 520 1147 697 860 812M1270 325L1371 285M1147 697L1371 770M1270 325L1371 350', 'M1371 515C1290 490 1240 530 1250 570L1205 650C1250 680 1330 660 1371 700', 'M360 590L240 690M255 560C240 600 260 630 285 625L300 575C270 560 255 555 255 560M330 690C380 640 420 640 440 700 470 770 400 790 365 830 320 870 310 830 315 770 318 730 320 700 330 690M440 710L465 745 520 730M280 910C350 880 400 900 520 950 510 1000 520 1020 580 1050 590 1100 580 1140 575 1194M650 1005L610 1194M550 840L530 945M270 400C280 330 300 320 325 315M375 825L340 790']) +
  roads([[7, 'M625 600L720 615 805 660 795 690 760 690 730 745M655 710L628 800M650 510L628 590M30 1070H75C110 1060 90 1000 92 970H140L138 990 100 1010M75 1075L78 1095 180 1105 187 1060'], [9, 'M365 620C390 560 390 520 370 516 345 520 345 560 375 580M30 640L145 665M65 370L35 500M90 360L230 385'],
    [11, 'M750 770L655 1000 520 955M1371 960L1285 1194M985 30L1030 0'], [14, 'M30 783C90 770 150 740 210 712L365 625C450 622 520 640 570 660L760 765 990 890 1320 1085 1371 1105M650 408L605 580 568 690M1215 0C1250 20 1300 35 1371 45'], [24, 'M30 135C120 130 170 150 195 200 240 280 235 400 230 530V700C235 820 270 920 285 1010L330 1194']]) +
  '<circle cx="557" cy="730" r="30" fill="#f3f3f2" stroke="#e0e0df" stroke-width="18"/><circle cx="557" cy="730" r="30" fill="none" stroke="#fff" stroke-width="12"/>' +
  label(243, 522, -91, 35, 250, 'Parkstraat') + label(268, 1008, 75, 35, 240, 'Parkstraat') + label(30, 368, 3, 28, 74, 'erad') + label(600, 630, -77, 29, 186, 'Albertsdijk') +
  curve('c5', 'M405 635C480 645 560 650 640 712', 29, 250, 'Oosterhofweg') + label(772, 785, 29, 30, 245, 'Oosterhofweg') + label(1330, 1110, 35, 30, 62, 'Oos') + label(1355, 975, -60, 27, 24, 'k') + label(44, 505, -80, 25, 26, 'at'));

// terrain triangulation
const pts = ('10,8 85,8 38,0 115,34 10,130 10,205 50,192 88,152 88,293 90,250 35,240 65,235 10,345 115,255 245,0 240,75 180,60 140,292 10,455 10,660 65,605 10,560 40,720 100,715 70,790 10,775 10,800 10,860 60,820 105,900 120,760 35,855 10,900 35,1028 75,1028 105,1025 35,970 10,1000 113,1080 62,1130 10,1185 140,1130 215,1185 140,985 180,1040 180,1150 10,1060 ' +
  '963,58 1003,60 1031,88 1085,0 1003,0 1160,34 1108,88 1158,88 1235,88 1265,34 1318,120 1210,125 1085,130 1018,188 1070,182 1083,208 1108,190 1173,255 1238,180 1318,200 1280,105 1318,20 1265,0 1160,0 975,228 1033,272 1083,265 1056,338 1083,348 1135,294 1212,308 1318,270 1214,349 1318,360 1235,478 1318,410 1056,430 1014,438 1033,478 1018,526 1056,556 1108,568 1172,592 1191,582 1241,503 1270,526 1318,480 1290,570 980,360 985,560 ' +
  '1083,615 1185,620 1135,672 1213,662 1213,762 1318,640 1004,705 970,725 1004,778 1160,818 1056,870 1110,895 1188,895 1083,900 1108,922 1160,922 1238,922 1290,860 1318,850 1056,975 1160,975 1240,975 1018,1010 1318,1000 1056,1075 1110,1070 1056,1132 1160,1132 1235,1080 1265,1132 1318,1060 1135,1184 1213,1184 1265,1160 1318,1190 1318,760 985,1184 1056,1190 20,1192 375,125 375,240 375,30 480,125 480,60 505,8 480,240 580,10 715,60 795,10 925,20 860,130 660,125 590,190 900,200 255,180 180,125 245,240 180,230').split(' ').map(s => s.split(',').map(Number));
for (let i = 0; i < 250; i++) pts.push([190 + rnd() * 780, 20 + rnd() * 1170]);
for (let i = 0; i < 70; i++) pts.push([690 + rnd() * 130, 270 + rnd() * 330]);
for (let i = 0; i < 14; i++) pts.push([190 + i * 62 + rnd() * 20, 1192]);
function delaunay(P) {
  const n = P.length, Q = P.map(([x, y]) => [x + rnd() * .01, y + rnd() * .01]).concat([[-9000, -9000], [9000, -9000], [600, 14000]]);
  const circ = (a, b, c) => {
    const [ax, ay] = Q[a], [bx, by] = Q[b], [cx, cy] = Q[c];
    const d = 2 * (ax * (by - cy) + bx * (cy - ay) + cx * (ay - by));
    const A = ax * ax + ay * ay, B = bx * bx + by * by, C = cx * cx + cy * cy;
    const x = (A * (by - cy) + B * (cy - ay) + C * (ay - by)) / d, y = (A * (cx - bx) + B * (ax - cx) + C * (bx - ax)) / d;
    return { v: [a, b, c], x, y, r: (ax - x) ** 2 + (ay - y) ** 2 };
  };
  let T = [circ(n, n + 1, n + 2)];
  for (let i = 0; i < n; i++) {
    const e = new Map(), keep = [];
    for (const t of T) {
      if ((Q[i][0] - t.x) ** 2 + (Q[i][1] - t.y) ** 2 < t.r) {
        for (const [a, b] of [[0, 1], [1, 2], [2, 0]]) {
          const u = Math.min(t.v[a], t.v[b]), w = Math.max(t.v[a], t.v[b]), k = u + '_' + w;
          e.has(k) ? e.set(k, null) : e.set(k, [u, w]);
        }
      } else keep.push(t);
    }
    for (const g of e.values()) if (g) keep.push(circ(g[0], g[1], i));
    T = keep;
  }
  const out = new Set();
  for (const t of T) for (const [a, b] of [[0, 1], [1, 2], [2, 0]]) {
    const u = Math.min(t.v[a], t.v[b]), w = Math.max(t.v[a], t.v[b]);
    if (w < n) out.add(`M${P[u].map(Math.round)}L${P[w].map(Math.round)}`);
  }
  return [...out].join('');
}

// houses: x, y, width, height, rotation
const north = [[490,105,34,28,45],[520,150,30,26,35],[532,50,24,16,-25],[535,70,22,16,-25],[512,115,22,34,30],[570,160,40,28,25],[605,160,34,26,100],[617,190,36,28,15],[645,130,24,30,15],[658,92,34,26,12],[672,66,24,24,0],[640,158,26,18,20],[755,82,30,22,8],[748,108,40,22,8],[733,146,42,24,15],[722,178,40,28,15],[690,215,26,30,30],[715,205,22,26,30],[726,236,22,32,25],[762,222,14,22,25],[763,258,24,24,15],[800,268,18,34,-25],[804,158,40,16,25],[830,138,26,18,20],[862,148,38,24,20],[855,172,30,22,20],[835,212,28,40,15],[886,110,24,30,20],[908,44,26,34,20],[868,75,14,20,10],[858,116,14,10,20],[952,150,26,30,15],[930,190,36,40,20],[958,190,22,26,10],[915,236,30,26,25],[898,262,26,22,15],[935,270,20,14,15],[972,245,18,34,5],[960,278,30,20,10],[895,308,48,44,22],[950,330,40,26,20],[972,335,18,26,5],[880,350,44,24,20],[858,375,30,30,20],[845,408,26,28,20],[915,398,30,34,15],[895,355,26,22,15],[880,402,18,16,20],[930,365,20,34,15],[958,418,28,28,15],[828,448,26,26,20],[858,438,20,14,-30],[820,472,26,16,20],[895,470,26,30,15],[925,482,44,28,12],[968,490,18,22,10],[875,535,36,40,15],[905,555,30,26,15],[940,575,34,30,15],[970,555,16,26,20],[835,580,50,34,15],[925,530,40,28,10],
  [224,250,12,38,0],[254,235,28,26,15],[250,262,30,18,10],[300,248,32,26,15],[322,268,22,16,15],[348,268,30,26,15],[390,288,36,30,15],[248,316,32,26,15],[228,298,12,20,0],[295,322,30,26,15],[340,338,32,26,20],[386,355,30,26,20],[270,302,20,12,5],[320,318,16,18,10],[365,345,16,20,10],[602,316,14,24,20]];
const south = [[885,620,36,36,20],[920,645,42,40,20],[822,605,34,18,15],[848,620,12,22,20],[975,838,24,22,-15],[965,690,6,10,0],[235,890,36,26,30],[290,955,36,20,15],[340,985,28,36,35],[242,1006,18,20,-40],[560,980,26,30,0],[558,1040,30,40,5],[710,960,12,30,-20],[900,916,34,30,-10],[940,905,28,28,-10],[858,940,34,30,30],[906,952,22,12,-10],[880,978,44,26,-10],[882,1008,50,14,-10],[880,1048,30,42,-5],[935,1020,34,14,-5],[920,1040,10,10,0],[935,940,12,10,0],[952,988,10,22,0],[912,1150,34,24,35],[625,1118,34,20,5],[652,1138,14,10,0],[345,1148,60,24,0],[395,1148,20,32,0],[740,890,24,18,-30],[722,900,22,16,-30],[300,680,10,28,5],[425,812,22,16,-40],[400,832,24,16,-40],[372,856,18,16,-40],[465,816,16,10,40],[570,870,16,20,0],[545,925,30,20,-40],[520,930,24,20,-40],[780,935,30,20,-30]];
const house = ([x, y, w, h, a]) => `<g transform="translate(${x} ${y}) rotate(${a})"><rect class="bld" x="${-w / 2}" y="${-h / 2}" width="${w}" height="${h}"/><path class="bldline" d="M${-w / 2} 0H${w / 2}${w > 20 ? `M0 ${-h / 2}V${h / 2}` : ''}${w > 32 ? `M${-w / 4} ${-h / 2}V${h / 2}M${w / 4} ${-h / 2}V${h / 2}` : ''}"/></g>`;
const big = ['228,112 290,68 296,45 350,0 372,14 376,38 385,36 398,56 350,106 333,92 322,103 333,120 280,170 254,155 258,140 240,138', '115,330 210,322 216,355 225,360 234,500 222,512 222,538 131,547 128,470 122,418 114,412 113,385 120,380', '237,395 248,403 357,397 357,428 238,436', '244,490 290,487 291,540 245,540', '316,466 353,463 355,530 320,535', '334,562 348,520 372,520 375,538 456,575 478,565 565,596 640,575 651,600 700,612 662,703 541,648 538,630 450,605 434,600', '455,320 483,250 497,233 626,280 618,305 598,298 515,265 505,272 486,328', '79,605 248,602 240,680 92,692', '258,603 340,610 400,640 462,680 428,712 390,690 340,660 250,645',
  '525,720 548,700 630,768 598,808', '433,795 510,733 524,748 446,810', '475,832 535,775 585,820 525,865', '341,965 395,905 470,830 508,865 370,985', '316,922 355,865 368,880 320,925', '365,1030 500,915 560,870 575,885 570,905 400,1045', '440,1040 530,970 535,1035 490,1050', '587,868 672,783 708,812 766,870 740,890 690,858 650,875 672,920 640,935 620,960 640,970 685,960 685,1015 617,1018 598,940', '688,758 738,672 808,720 780,770 750,762', '715,775 740,760 800,780 860,812 893,840 880,882 790,845', '187,1043 228,1018 270,1068 212,1118', '287,1095 355,1038 415,1060 405,1110 290,1118', '610,1055 635,1045 650,1035 670,1042 705,1060 700,1110 612,1110', '422,1060 480,1070 575,1070 575,1098 422,1100', '271,1140 400,1130 405,1165 315,1168 310,1180 272,1180', '437,1125 555,1118 562,1194 450,1194', '736,950 785,898 815,970 790,980', '780,1000 825,990 836,1045 785,1045', '783,1055 840,1055 832,1130 778,1130', '873,1085 930,1070 942,1110 885,1125', '105,880 165,868 188,950 135,958', '145,970 165,962 183,1010 165,1018', '195,940 210,930 280,965 330,1000 340,1020 295,1048 260,1000'];
const detail = 'M240 132L312 60 368 22M262 140L322 92M300 60L350 106M290 68L330 120M305 50L345 98M120 347L213 345M131 528L222 516M205 360V412H216V360M145 443H167V466H145zM150 443V466M158 443V466M145 450H167M145 458H167M181 382V398M244 490L291 540M290 487L245 540M268 395V436M335 398V430M456 575L450 600M478 565L456 575M570 622L545 640M640 582L690 612M470 325L500 250 600 285M98 642L145 635V645L98 650zM165 636L230 640V648L165 644zM150 645V685M162 645V688M150 650L165 650M290 606L280 640 360 640M340 628L430 690M370 640L360 665M400 655L385 680M470 300L480 290M355 950L375 975M370 935L390 960M385 918L408 945M400 900L425 930M418 885L445 915M430 872L460 902M445 860L475 888M458 846L490 875M395 1005L425 1030M410 990L440 1015M425 978L455 1002M440 965L470 990M455 952L485 976M470 940L500 964M485 928L512 950M500 915L530 940M515 905L540 925M380 1018L410 1040M530 895L560 915M495 830L545 800M500 850L560 805M510 790L555 840M555 730L598 790M545 750L610 760M620 870L680 830M610 855L665 905M630 840L690 880M650 818L705 855M680 800L640 860M700 815L750 880M600 900L640 930M598 935H640M650 975V1015M725 690L790 740M715 705L780 755M730 690L700 765M770 705L740 760M755 770L735 800M790 782L770 825M815 800L795 845M815 815L850 805 840 855 810 840zM860 815L850 875M200 1035L250 1090M215 1070L255 1045M190 1070L230 1060M300 1090L370 1050 400 1100M330 1060L350 1115M310 1110L380 1070M612 1080H700M630 1050V1110M685 1050V1110M655 1040V1110M645 1065L670 1080M440 1062V1100M460 1068V1100M480 1070V1100M500 1070V1100M520 1070V1100M540 1070V1100M422 1080H575M300 1138V1180M320 1135V1165M345 1135V1165M370 1132V1165M272 1155H400M450 1140L555 1130M470 1125L480 1194M500 1122V1194M530 1120V1194M445 1160H560M452 1178H560M750 940L800 930M765 925L790 970M782 1020H830M800 995V1045M783 1075H838M783 1092H836M780 1110H834M810 1055V1130M890 1085L910 1115M110 900L175 900M120 890L175 945M165 880L130 950M140 870L150 955M110 925L180 920M150 985L178 995M215 940L240 975M240 950L265 1000M262 962L300 1040M285 975L270 1015M300 985L320 1030M280 1000L310 990M290 1020L325 1005';
// trees: x, y, rx, ry, kind
const trees = [[637,38,37,35,2],[789,102,18,28,1],[785,188,32,22,2],[207,194,18,26,1],[656,530,34,30,2],[785,573,22,28,2],[935,524,22,22,2],[428,445,16,28,1],[733,362,18,18,1],[555,300,18,15,1],[248,275,20,14,0],[548,532,28,18,1],[540,572,26,14,0],[578,104,16,18,1],[610,138,20,16,0],[470,80,20,14,0],[775,62,20,13,0],[876,55,20,14,0],[838,250,18,16,0],[690,192,18,12,0],[323,836,22,26,1],[297,902,20,30,1],[432,842,24,20,1],[978,1130,26,32,2],[694,1034,17,17,1],[913,857,24,14,0],[215,910,22,20,1],[434,235,14,14,0],[431,357,12,20,0],[414,397,14,20,0],[392,322,24,12,0],[354,245,15,12,0],[292,275,15,13,0],[520,312,18,15,0],[500,336,14,16,0],[482,360,14,12,0],[450,418,16,14,0],[272,456,17,13,0],[536,478,15,17,0],[566,490,12,12,0],[683,456,14,14,0],[805,348,13,16,0],[790,374,12,12,0],[778,406,12,15,0],[768,432,12,12,0],[930,366,12,20,0],[738,640,15,14,0],[514,714,17,17,0],[487,677,15,13,0],[262,692,24,10,0],[315,688,8,16,0],[672,734,14,12,0],[549,750,10,10,0],[485,907,12,10,0],[255,926,14,12,0],[688,918,20,12,0],[662,950,24,12,0],[560,950,18,9,0],[598,1065,7,32,0],[315,1054,12,12,0],[351,916,14,14,0],[905,640,14,20,0],[881,505,18,16,0],[783,516,9,16,0],[833,520,8,14,0],[825,697,12,11,0],[568,1090,11,11,0],[220,1110,14,8,0],[930,1060,26,10,0],[945,1090,16,20,0],[760,138,16,14,0],[650,186,10,16,0],[452,186,12,10,0],[625,313,12,12,0],[875,950,14,10,0],[775,930,14,14,0],[340,345,12,12,0],[752,612,10,16,0],[650,780,13,10,0],[872,640,8,8,0]];
const dots = '183,68 208,116 198,146 280,178 232,182 238,196 260,216 310,226 346,206 390,198 383,216 400,214 449,164 464,176 471,172 435,280 438,75 410,58 385,82 500,156 518,170 548,218 572,228 597,240 622,250 645,262 551,102 588,82 608,98 680,126 700,150 834,95 822,80 906,88 925,92 888,158 890,172 708,258 732,268 668,224 728,296 734,316 775,316 800,330 820,300 834,298 843,280 218,344 230,368 325,382 258,396 355,436 290,440 324,284 345,298 364,306 368,502 400,498 260,554 280,552 322,565 334,566 206,552 495,542 518,494 530,452 578,386 593,372 600,400 575,408 608,392 708,424 742,488 716,516 717,542 708,574 632,494 790,496 850,550 262,594 248,664 258,680 275,664 305,708 320,604 352,610 407,632 480,625 494,630 508,637 470,672 468,700 449,724 427,752 402,787 254,776 270,776 216,782 596,686 622,696 642,705 590,830 607,822 620,804 551,862 528,880 463,932 425,965 384,998 349,1026 306,978 335,942 276,1089 200,1109 180,866 178,1040 595,1000 728,1040 740,1040 760,984 688,1000 777,876 797,876 814,886 806,902 823,918 845,888 843,908 830,928 820,954 830,974 905,770 872,724 922,806 943,808 935,826 947,880 963,798 965,720 970,678 858,1070 903,1062 845,1088 584,720 792,620 852,644 935,614 915,1030 908,1005 340,890 362,890 238,1108 254,1118 415,410 320,940'.split(' ').map(s => { const [x, y] = s.split(','); return `<circle cx="${x}" cy="${y}" r="6.500"/>`; }).join('');

put('model',
  '<clipPath id="mc"><rect x="10" y="-2" width="1309" height="1200"/></clipPath><g clip-path="url(#mc)"><rect x="10" y="-2" width="1309" height="1200" fill="#dfc498"/>' +
  `<path class="tin" d="${delaunay(pts)}M10 125H1318M10 455H240M375 30V700M480 0V460M963 780H1318M10 780H970M500 662H1213M963 922H1318"/>` +
  `<path d="M575 305L550 400 610 425M560 350C590 360 570 380 600 395M700 300V420M720 270V330M690 268H720" fill="none" stroke="#b02018" stroke-width="3"/>` +
  `<g class="tree-dot">${dots}</g>` +
  trees.filter(t => !t[4]).map(([x, y, a, b]) => `<ellipse cx="${x}" cy="${y}" rx="${a}" ry="${b}" fill="url(#leaflo)" stroke="#151d12" stroke-width="2"/>`).join('') +
  north.concat(south).map(house).join('') + polys('bld', big) + `<path class="bldline" d="${detail}"/>` +
  '<polygon points="444,400 454,376 508,398 530,338 563,350 542,405 608,435 665,300 656,296 665,283 704,298 680,360 686,370 680,390 670,395 672,405 640,460 694,480 684,508 628,485 605,538 572,524 592,470 520,440 499,487 472,475 490,430" fill="#f00" stroke="#5a0a08" stroke-width="3"/>' +
  '<path class="bld" d="M558 552L585 562 592 552 635 568 632 580 560 568z"/>' +
  '<polygon points="568,568 640,582 650,600 640,620 650,632 642,655 568,622 572,600 564,595" fill="#ff0"/>' +
  trees.filter(t => t[4]).map(([x, y, a, b, k]) => `<ellipse cx="${x}" cy="${y}" rx="${a}" ry="${b}" fill="url(#${k === 2 ? 'leafhi' : 'leaf'})" stroke="#1a2513" stroke-width="3"/>`).join('') +
  '<rect x="186" y="66" width="773" height="1059" fill="none" stroke="#2323ff" stroke-width="6.500"/><path d="M10 0V1198M1318 0V1198" stroke="#7c776c" stroke-width="4"/></g>');
```
